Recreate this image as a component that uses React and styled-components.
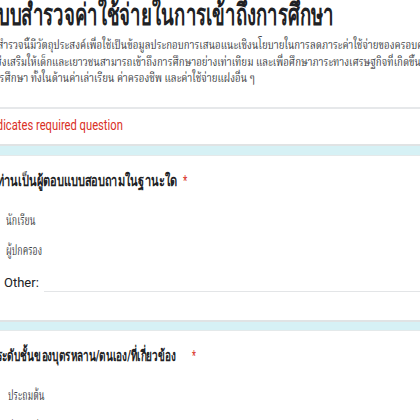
import React from "react";
import styled, { createGlobalStyle } from "styled-components";

const GlobalStyle = createGlobalStyle`
  html, body {
    margin: 0;
    padding: 0;
    background: #d6f1f5;
    overflow: hidden;
  }
  body {
    font-family: "Roboto", sans-serif;
    color: #202124;
  }
`;

const Page = styled.div`
  display: flex;
  flex-direction: column;
  width: 470px;
  margin: -3px 0 0 -20px;
`;

const Card = styled.section`
  background: #ffffff;
  border-top: ${(p) => (p.$first ? "none" : "1px solid #e4e9ea")};
  border-bottom: 2px solid #e0e3e4;
  margin-bottom: ${(p) => p.$gap || 0}px;
  padding: ${(p) => (p.$first ? "0" : `13px 0 ${p.$bottom || 0}px 17px`)};
`;

/* Text in the shot is horizontally condensed, so each line is squeezed from its left edge */
const Squeezed = styled.div`
  transform: scaleX(${(p) => p.$sx});
  transform-origin: 0 50%;
  white-space: nowrap;
`;

const HeaderTop = styled.div`
  padding-bottom: 19px;
  border-bottom: 2px solid #e6e8ea;
`;

const Title = styled(Squeezed)`
  margin: 0 0 0 6px;
  font-size: 30px;
  line-height: 36px;
  font-weight: 700;
  color: #202124;
`;

const Description = styled(Squeezed)`
  margin: 5px 0 0 -1px;
  font-family: "Noto Serif Thai", "Liberation Serif", serif;
  font-size: 11.5px;
  line-height: 16.5px;
  color: #3c4043;
`;

const Required = styled(Squeezed)`
  font-size: 14px;
  line-height: 20px;
  color: #d93025;
  padding: 6.5px 0 9px;
`;

const Question = styled(Squeezed)`
  font-size: 15.5px;
  line-height: 24px;
  font-weight: 700;
  color: #202124;
`;

const Star = styled.span`
  color: #d93025;
  font-weight: 400;
  font-size: 14px;
  margin-left: ${(p) => p.$gap}px;
`;

const Options = styled.div`
  display: flex;
  flex-direction: column;
  margin-top: 14px;
`;

const Option = styled(Squeezed)`
  height: 30px;
  line-height: 30px;
  margin-left: ${(p) => p.$indent}px;
  font-family: "Noto Serif Thai", "Liberation Serif", serif;
  font-size: 13.5px;
  color: #3c4043;
`;

const OtherRow = styled.div`
  height: 30px;
  display: flex;
  align-items: center;
  gap: 5px;
  margin-left: 7px;
`;

const OtherLabel = styled.span`
  font-size: 13px;
  color: #202124;
`;

const OtherInput = styled.div`
  flex: 1;
  align-self: stretch;
  border-bottom: 1.5px solid #e3e5e7;
  margin-bottom: 5px;
`;

export default function App() {
  return (
    <>
      <GlobalStyle />
      <Page>
        <Card $first $gap={9}>
          <HeaderTop>
            <Title $sx={0.62}>แบบสำรวจค่าใช้จ่ายในการเข้าถึงการศึกษา</Title>
            <Description $sx={0.845}>
              แบบสำรวจนี้มีวัตถุประสงค์เพื่อใช้เป็นข้อมูลประกอบการเสนอแนะเชิงนโยบายในการลดภาระค่าใช้จ่ายของครอบครัว
              <br />
              และส่งเสริมให้เด็กและเยาวชนสามารถเข้าถึงการศึกษาอย่างเท่าเทียม และเพื่อศึกษาภาระทางเศรษฐกิจที่เกิดขึ้นจาก
              <br />
              ในการศึกษา ทั้งในด้านค่าเล่าเรียน ค่าครองชีพ และค่าใช้จ่ายแฝงอื่น ๆ
            </Description>
          </HeaderTop>
          <Required $sx={0.8}>* Indicates required question</Required>
        </Card>

        <Card $gap={8} $bottom={23}>
          <Question $sx={0.71}>
            ท่านเป็นผู้ตอบแบบสอบถามในฐานะใด<Star $gap={8}>*</Star>
          </Question>
          <Options>
            <Option $sx={0.65} $indent={9}>นักเรียน</Option>
            <Option $sx={0.65} $indent={9}>ผู้ปกครอง</Option>
            <OtherRow>
              <OtherLabel>Other:</OtherLabel>
              <OtherInput />
            </OtherRow>
          </Options>
        </Card>

        <Card $bottom={20}>
          <Question $sx={0.645}>
            ระดับชั้นของบุตรหลาน/ตนเอง/ที่เกี่ยวข้อง<Star $gap={25}>*</Star>
          </Question>
          <Options>
            <Option $sx={0.65} $indent={11}>ประถมต้น</Option>
            <Option $sx={0.65} $indent={11}>ประถมปลาย</Option>
          </Options>
        </Card>
      </Page>
    </>
  );
}
